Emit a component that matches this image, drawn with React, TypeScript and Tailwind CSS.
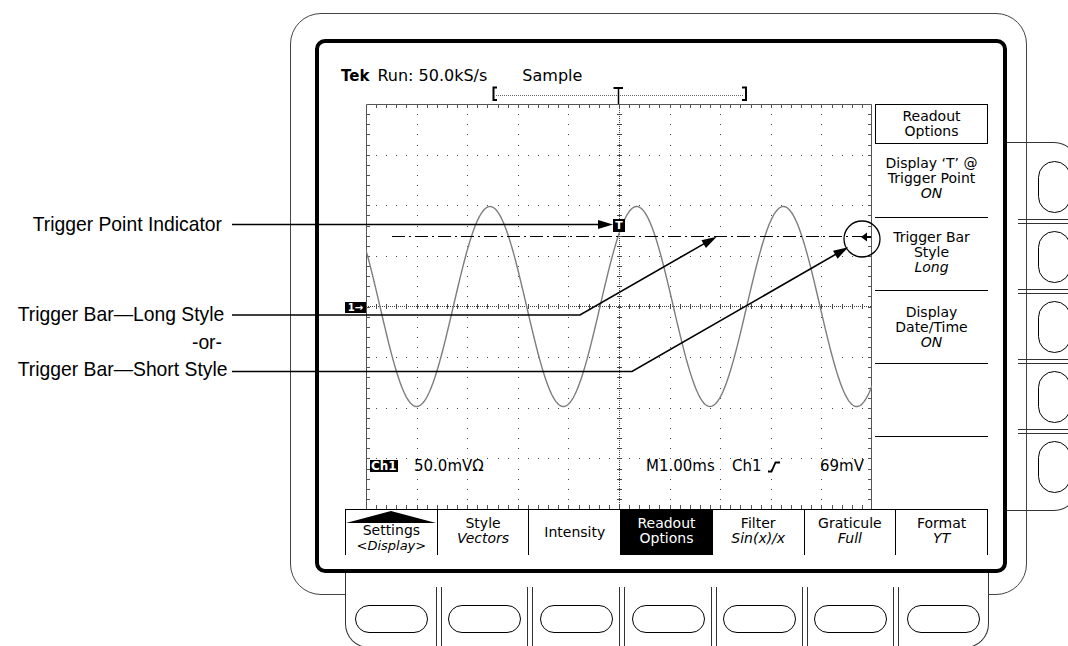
import React from "react";

// graticule geometry: 10 x 8 divisions
const GW = 506;
const GH = 405;
const DX = GW / 10;
const DY = GH / 8;

const wavePath = () => {
  let d = "";
  for (let x = 0; x <= GW; x++) {
    const y = 306.5 - 100 * Math.sin((2 * Math.PI * (x + 366 - 600)) / 146.7) - 104;
    d += (x === 0 ? "M" : "L") + x + "," + y.toFixed(2) + " ";
  }
  return d;
};

const ticksX = Array.from({ length: 49 }, (_, m) => Math.round(((m + 1) * DX) / 5) + 0.5);
const ticksY = Array.from({ length: 39 }, (_, j) => Math.round(((j + 1) * DY) / 5) + 0.5);

const gridDots = () => {
  const dots: { x: number; y: number }[] = [];
  for (let i = 1; i < 10; i++) {
    if (i === 5) continue;
    for (let j = 1; j < 40; j++) dots.push({ x: Math.round(i * DX), y: Math.round((j * DY) / 5) });
  }
  for (let k = 1; k < 8; k++) {
    if (k === 4) continue;
    for (let m = 1; m < 50; m++) dots.push({ x: Math.round((m * DX) / 5), y: Math.round(k * DY) });
  }
  return dots;
};

const head = (tx: number, ty: number, fx: number, fy: number, len = 15, w = 4.5) => {
  const l = Math.hypot(tx - fx, ty - fy);
  const ux = (tx - fx) / l;
  const uy = (ty - fy) / l;
  const bx = tx - ux * len;
  const by = ty - uy * len;
  return `${tx},${ty} ${bx - uy * w},${by + ux * w} ${bx + uy * w},${by - ux * w}`;
};

const Labels = () => (
  <div className="w-[290px] shrink-0 font-['Liberation_Sans',Arial,sans-serif] text-[21px] leading-[24px] whitespace-nowrap">
    <div className="mt-[212px] w-[222px] text-right origin-right scale-x-[0.92]">Trigger Point Indicator</div>
    <div className="mt-[66px] w-[222px] text-right origin-right scale-x-[0.92]">Trigger Bar—Long Style</div>
    <div className="mt-[4px] w-[222px] text-right origin-right scale-x-[0.92]">-or-</div>
    <div className="mt-[3px] w-[222px] text-right origin-right scale-x-[0.92]">Trigger Bar—Short Style</div>
  </div>
);

const Graticule = () => (
  <div className="relative w-[506px] h-[405px] shrink-0">
    <svg width={GW} height={GH} className="block">
      <path d="M0.5,405 V0.5 H505.5 V405" fill="none" stroke="#555" />
      {ticksX.map((x) => (
        <g key={"tx" + x}>
          <line x1={x} x2={x} y1={0} y2={4} stroke="#555" />
          <line x1={x} x2={x} y1={401} y2={405} stroke="#555" />
          <line x1={x} x2={x} y1={200} y2={205} stroke="#444" />
        </g>
      ))}
      {ticksY.map((y) => (
        <g key={"ty" + y}>
          <line x1={0} x2={4} y1={y} y2={y} stroke="#555" />
          <line x1={502} x2={506} y1={y} y2={y} stroke="#555" />
          <line x1={251} x2={256} y1={y} y2={y} stroke="#444" />
        </g>
      ))}
      {gridDots().map((d, i) => (
        <rect key={i} x={d.x} y={d.y} width={1} height={1} fill="#444" />
      ))}
      <line x1={253.5} x2={253.5} y1={0} y2={405} stroke="#444" strokeDasharray="1 1" />
      <line x1={0} x2={506} y1={202.5} y2={202.5} stroke="#444" strokeDasharray="1 1" />
      <path d={wavePath()} fill="none" stroke="#7d7d7d" strokeWidth={1.4} />
      <line x1={26} x2={506} y1={132.5} y2={132.5} stroke="#000" strokeWidth={1.2} strokeDasharray="13 4 2 4" />
    </svg>
    <div className="absolute left-[247px] top-[115px] w-[12px] h-[13px] bg-black text-white text-[11px] font-bold leading-[13px] text-center">
      T
    </div>
    <span className="absolute left-[4px] top-[356px] h-[12px] px-[1px] bg-black text-white text-[12px] font-bold leading-[12px]">
      Ch1
    </span>
    <span className="absolute left-[48px] top-[355px] text-[15px] leading-[15px] whitespace-nowrap">50.0mVΩ</span>
    <span className="absolute left-[280px] top-[355px] text-[15px] leading-[15px] whitespace-nowrap">M1.00ms</span>
    <span className="absolute left-[366px] top-[355px] text-[15px] leading-[15px]">Ch1</span>
    <svg className="absolute left-[401px] top-[357px]" width={14} height={12}>
      <path d="M1,10.5 H4.5 L8.5,1.5 H13" fill="none" stroke="#000" strokeWidth={1.8} />
    </svg>
    <span className="absolute left-[454px] top-[355px] text-[15px] leading-[15px]">69mV</span>
  </div>
);

const SideMenu = () => (
  <div className="w-[113px] shrink-0 flex flex-col text-[14px] leading-[15px] text-center whitespace-nowrap">
    <div className="h-[40px] border border-black flex flex-col justify-center">
      <div>Readout</div>
      <div>Options</div>
    </div>
    <div className="h-[74px] border-b border-black pt-[12px]">
      <div>Display ‘T’ @</div>
      <div>Trigger Point</div>
      <div className="italic">ON</div>
    </div>
    <div className="h-[73px] border-b border-black pt-[12px]">
      <div>Trigger Bar</div>
      <div>Style</div>
      <div className="italic">Long</div>
    </div>
    <div className="h-[73px] border-b border-black pt-[14px]">
      <div>Display</div>
      <div>Date/Time</div>
      <div className="italic">ON</div>
    </div>
    <div className="h-[73px] border-b border-black" />
  </div>
);

const menu = [
  { a: "Style", b: "Vectors" },
  { a: "Intensity", b: "" },
  { a: "Readout", b: "Options", inv: true },
  { a: "Filter", b: "Sin(x)/x" },
  { a: "Graticule", b: "Full" },
  { a: "Format", b: "YT" },
];

const BottomMenu = () => (
  <div className="ml-[26px] w-[643px] h-[46px] shrink-0 grid grid-cols-7 border-t border-l border-black text-[14px] leading-[15px] text-center whitespace-nowrap">
    <div className="border-r border-black flex flex-col items-center pt-[1px]">
      <svg width={90} height={12} className="block">
        <polygon points="0,12 45,0 90,12" fill="#000" />
      </svg>
      <div>Settings</div>
      <div className="italic text-[13px]">&lt;Display&gt;</div>
    </div>
    {menu.map((m) => (
      <div
        key={m.a}
        className={
          "border-r border-black flex flex-col items-center " +
          (m.b ? "pt-[6px] " : "justify-center ") +
          (m.inv ? "bg-black text-white" : "")
        }
      >
        <div>{m.a}</div>
        {m.b && <div className={m.inv ? "" : "italic"}>{m.b}</div>}
      </div>
    ))}
  </div>
);

const Screen = () => (
  <div className="ml-[24px] mt-[25px] w-[692px] h-[534px] shrink-0 rounded-[10px] border-4 border-black flex flex-col font-['DejaVu_Sans',sans-serif]">
    <div className="h-[61px] shrink-0 flex flex-col">
      <div className="mt-[23px] ml-[22px] flex items-baseline text-[16px] leading-[20px] whitespace-nowrap">
        <span className="font-bold text-[15px]">Tek</span>
        <span className="ml-[8px]">Run: 50.0kS/s</span>
        <span className="ml-[35px]">Sample</span>
      </div>
      <svg className="ml-[171px] block" width={262} height={18}>
        <path d="M7,1.5 H3.5 V14 H7" fill="none" stroke="#000" strokeWidth={2} />
        <line x1={6} x2={253} y1={9.5} y2={9.5} stroke="#666" strokeDasharray="1 1" />
        <path d="M123.5,2 H133" stroke="#000" strokeWidth={2} />
        <line x1={128.5} x2={128.5} y1={2} y2={18} stroke="#000" strokeWidth={1.5} />
        <path d="M252,1.5 H256 V14 H252" fill="none" stroke="#000" strokeWidth={2} />
      </svg>
    </div>
    <div className="flex h-[405px] shrink-0">
      <div className="w-[47px] shrink-0">
        <div className="ml-[26px] mt-[198px] w-[21px] h-[11px] bg-black text-white text-[10px] font-bold leading-[11px] flex items-center justify-center">
          1→
        </div>
      </div>
      <Graticule />
      <div className="w-[3px] shrink-0" />
      <SideMenu />
    </div>
    <BottomMenu />
  </div>
);

const SidePanel = () => (
  <div className="mt-[128px] w-[71px] h-[369px] shrink-0 rounded-r-[24px] border-y border-r border-[#333] flex flex-col pt-[11px]">
    {[0, 1, 2, 3, 4].map((i) => (
      <React.Fragment key={i}>
        {i > 0 && <div className="ml-[11px] h-[5px] shrink-0 border-y border-[#333]" />}
        <div className="h-[65px] shrink-0 flex items-center">
          <div className="ml-[31px] w-[33px] h-[52px] rounded-full border-[1.5px] border-black" />
        </div>
      </React.Fragment>
    ))}
  </div>
);

const BottomPanel = () => (
  <div className="ml-[54px] w-[644px] h-[75px] shrink-0 bg-white border-x border-b border-[#333] rounded-b-[24px] pt-[14px] grid grid-cols-[90px_6px_85px_6px_86px_6px_86px_6px_85px_6px_85px_6px_89px]">
    {[0, 1, 2, 3, 4, 5, 6].map((i) => (
      <React.Fragment key={i}>
        {i > 0 && <div className="border-x border-[#333]" />}
        <div className="flex justify-center">
          <div className="mt-[18px] w-[73px] h-[28px] rounded-full border-[1.5px] border-black" />
        </div>
      </React.Fragment>
    ))}
  </div>
);

const Bezel = () => (
  <div className="mt-[13px] w-[737px] h-[582px] shrink-0 rounded-[31px] border border-[#444] flex flex-col">
    <div className="flex items-start shrink-0">
      <Screen />
      <SidePanel />
    </div>
    <BottomPanel />
  </div>
);

const Leaders = () => (
  <svg className="absolute inset-0 pointer-events-none" width={1068} height={646}>
    <g stroke="#000" strokeWidth={1.6} fill="none">
      <path d="M232,224.5 H600" />
      <path d="M232,315 H580 L706,242.6" />
      <path d="M232,371.5 H632 L838,253" />
      <circle cx={862} cy={239} r={18} strokeWidth={1.3} />
      <path d="M865,237 H871" strokeWidth={2} />
    </g>
    <g fill="#000">
      <polygon points={head(613, 224.5, 232, 224.5)} />
      <polygon points={head(716.7, 236.7, 580, 315)} />
      <polygon points={head(848.3, 247.3, 632, 371.5)} />
      <polygon points="861,237 867,232.5 867,241.5" />
    </g>
  </svg>
);

export default function App() {
  return (
    <div className="relative w-[1068px] h-[646px] overflow-hidden bg-white text-black">
      <div className="flex">
        <Labels />
        <Bezel />
      </div>
      <Leaders />
    </div>
  );
}
